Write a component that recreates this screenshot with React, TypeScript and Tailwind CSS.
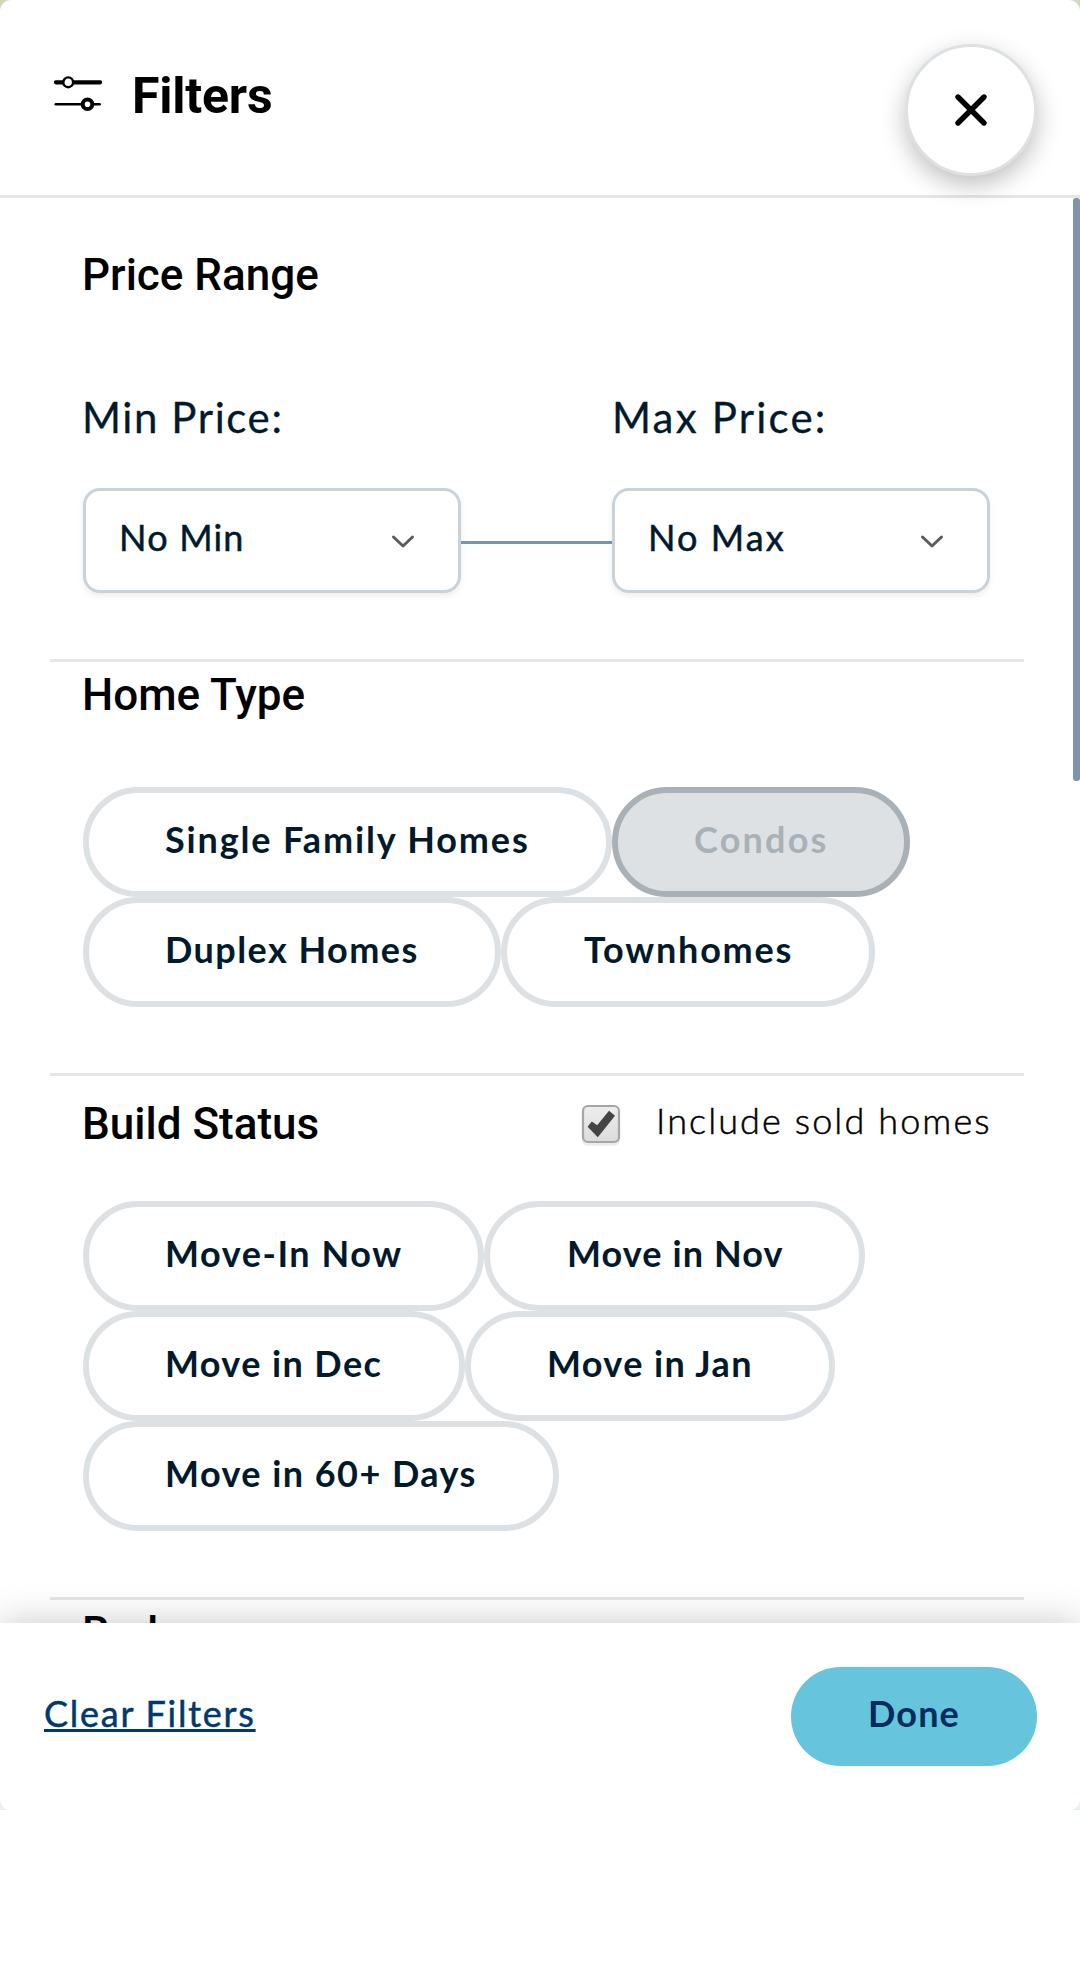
import type { ReactNode } from 'react';

function SlidersIcon() {
  return (
    <svg className="block h-[36px] w-[48px]" viewBox="0 0 48 36" fill="none" stroke="#000" strokeLinecap="round">
      <path d="M2 6.3H46" strokeWidth="4.2" />
      <circle cx="14.2" cy="6.3" r="4.9" fill="#fff" strokeWidth="2.4" />
      <path d="M1.8 28.3H45.6" strokeWidth="2.6" />
      <circle cx="33.5" cy="28.3" r="4.8" fill="#fff" strokeWidth="4" />
    </svg>
  );
}

function SectionTitle({ children }: { children: ReactNode }) {
  return <h2 className="-ml-px font-[Roboto,sans-serif] text-[44px] leading-[52px] font-medium text-black">{children}</h2>;
}

function PriceSelect({ label, value, labelClass, valueClass }: { label: string; value: string; labelClass: string; valueClass: string }) {
  return (
    <div className="w-[378px]">
      <div className={`text-[42px] leading-[50px] whitespace-nowrap text-[#001a2c] [-webkit-text-stroke:0.3px_#001a2c] ${labelClass}`}>{label}</div>
      <button className="mt-[46px] flex h-[105px] w-full items-center justify-between rounded-[17px] border-3 border-[#cad2d9] bg-white pr-[42px] pb-[7px] pl-[33px] shadow-[0_3px_6px_rgba(0,0,0,0.07)]">
        <span className={`text-[36px] leading-[44px] text-[#001a2c] [-webkit-text-stroke:0.5px_#001a2c] ${valueClass}`}>{value}</span>
        <svg className="mt-[9px] h-[16px] w-[26px]" viewBox="0 0 26 16" fill="none" stroke="#5c5c5c" strokeWidth="3" strokeLinecap="round" strokeLinejoin="round">
          <path d="M3.5 3L13 12L22.5 3" />
        </svg>
      </button>
    </div>
  );
}

function Pill({ children, className, disabled }: { children: ReactNode; className: string; disabled?: boolean }) {
  const tone = disabled ? 'border-[#a9b1b7] bg-[#dde1e4] text-[#a9b1b7]' : 'border-[#dde1e4] bg-white text-[#001a2c]';
  return (
    <button
      disabled={disabled}
      className={`flex h-[110px] shrink-0 items-center rounded-full border-6 pb-[6px] text-[36px] leading-[44px] font-bold whitespace-nowrap ${tone} ${className}`}
    >
      {children}
    </button>
  );
}

function Checkbox() {
  return (
    <svg className="block h-[42px] w-[40px]" viewBox="0 0 40 42">
      <defs>
        <linearGradient id="box" x1="0" y1="0" x2="0" y2="1">
          <stop offset="0" stopColor="#eeeeee" />
          <stop offset="1" stopColor="#dcdcdc" />
        </linearGradient>
      </defs>
      <rect x="1" y="3.5" width="38" height="38" rx="5.5" fill="#ebebeb" />
      <rect x="2" y="2" width="36" height="36" rx="5" fill="url(#box)" stroke="#a6a6a6" strokeWidth="2.2" />
      <path d="M6.6 22.8L10.8 17.6L16.2 21.2L28 6.8L34 11.8L16.8 33.2Z" fill="#444" />
    </svg>
  );
}

export default function App() {
  return (
    <div className="h-[1962px] w-[1080px] overflow-hidden bg-white font-[Lato,sans-serif]">
      <div className="h-[1810px] bg-linear-to-b from-[#ccd9bd] from-50% to-[#e8f1f8] to-50%">
        <div className="relative flex h-full flex-col overflow-hidden rounded-[11px] bg-white">
          <header className="flex h-[198px] shrink-0 justify-between border-b-3 border-[#e5e5ea] pr-[43px] pl-[54px]">
            <div className="flex items-start">
              <div className="mt-[76px]">
                <SlidersIcon />
              </div>
              <h1 className="mt-[67px] ml-[30px] font-[Roboto,sans-serif] text-[50px] leading-[58px] font-bold tracking-[-0.2px] text-black">Filters</h1>
            </div>
            <button className="relative z-10 mt-[44px] flex size-[132px] items-center justify-center rounded-full border-3 border-[#dde1e4] bg-white shadow-[0_9px_24px_rgba(0,0,0,0.25)]">
              <svg className="size-[34px]" viewBox="0 0 34 34" fill="none" stroke="#000" strokeWidth="5.4" strokeLinecap="round">
                <path d="M4 4L30 30M30 4L4 30" />
              </svg>
            </button>
          </header>

          <div className="flex h-[1425px] shrink-0 overflow-hidden">
            <main className="ml-[50px] w-[974px]">
              <section className="h-[464px] border-b-3 border-[#e5e5ea] px-[33px] pt-[51px]">
                <SectionTitle>Price Range</SectionTitle>
                <div className="mt-[91px] flex">
                  <PriceSelect label="Min Price:" value="No Min" labelClass="-ml-px tracking-[1.6px]" valueClass="tracking-[1.2px]" />
                  <div className="mt-[149px] h-[3px] w-[151px] bg-[#7d94ad]" />
                  <PriceSelect label="Max Price:" value="No Max" labelClass="tracking-[2.2px]" valueClass="tracking-[2.1px]" />
                </div>
              </section>

              <section className="h-[414px] border-b-3 border-[#e5e5ea] px-[33px] pt-[7px]">
                <SectionTitle>Home Type</SectionTitle>
                <div className="mt-[66px] flex">
                  <Pill className="w-[529px] pl-[76px] tracking-[1.85px]">Single Family Homes</Pill>
                  <Pill disabled className="w-[298px] pl-[76px] tracking-[2.2px]">Condos</Pill>
                </div>
                <div className="flex">
                  <Pill className="w-[418px] pl-[76px] tracking-[1.45px]">Duplex Homes</Pill>
                  <Pill className="w-[374px] pl-[77px] tracking-[1.8px]">Townhomes</Pill>
                </div>
              </section>

              <section className="h-[524px] border-b-3 border-[#e5e5ea] px-[33px] pt-[22px]">
                <div className="flex">
                  <SectionTitle>Build Status</SectionTitle>
                  <label className="ml-auto flex">
                    <span className="mt-[6px]">
                      <Checkbox />
                    </span>
                    <span className="ml-[35px] w-[335px] text-[36px] leading-[44px] font-light tracking-[2.1px] whitespace-nowrap text-black [-webkit-text-stroke:0.5px_#000]">Include sold homes</span>
                  </label>
                </div>
                <div className="mt-[51px] flex">
                  <Pill className="w-[401px] pl-[76px] tracking-[1.55px]">Move-In Now</Pill>
                  <Pill className="w-[381px] pl-[77px] tracking-[1.1px]">Move in Nov</Pill>
                </div>
                <div className="flex">
                  <Pill className="w-[382px] pl-[76px] tracking-[1.4px]">Move in Dec</Pill>
                  <Pill className="w-[370px] pl-[76px] tracking-[1.4px]">Move in Jan</Pill>
                </div>
                <div className="flex">
                  <Pill className="w-[476px] pl-[76px] tracking-[1.45px]">Move in 60+ Days</Pill>
                </div>
              </section>

              <section className="px-[33px] pt-[7px]">
                <SectionTitle>Beds</SectionTitle>
              </section>
            </main>
            <div className="ml-auto h-[583px] w-[7px] rounded-[3px] bg-[#7d94ad]" />
          </div>

          <footer className="relative flex grow justify-between bg-white pr-[43px] pl-[44px] shadow-[0_0_36px_rgba(0,0,0,0.22)]">
            <a className="mt-[68px] h-[44px] text-[36px] leading-[44px] tracking-[1.75px] text-[#003a6a] underline decoration-3 underline-offset-[2px] [-webkit-text-stroke:0.5px_#003a6a]">Clear Filters</a>
            <button className="mt-[44px] h-[99px] w-[246px] rounded-full bg-[#67c4dd] pb-[8px] text-[36px] leading-[44px] font-bold tracking-[1.1px] text-[#002b5c]">Done</button>
          </footer>
        </div>
      </div>
    </div>
  );
}
